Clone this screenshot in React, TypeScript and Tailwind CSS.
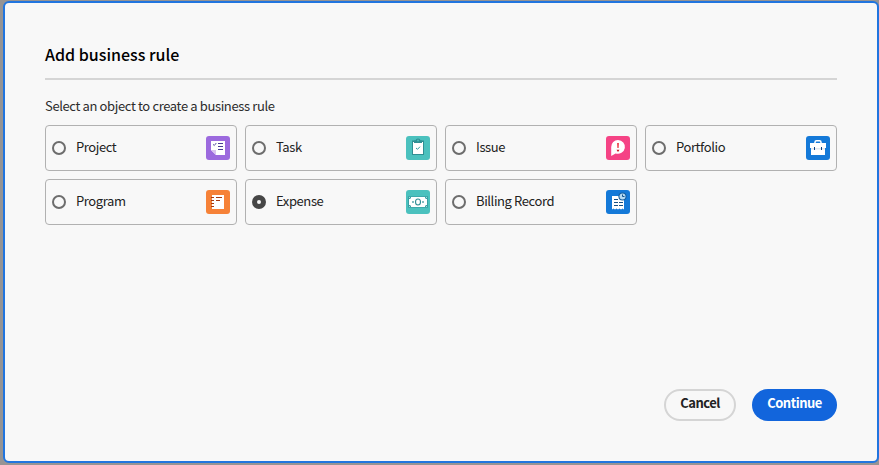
import { useState } from "react";
import type { ReactNode } from "react";

const ProjectIcon = () => (
  <>
    <path d="M5 5h14v14H10L5 14z" fill="#fff" />
    <path d="M5 14h5v5z" fill="#d9c3ef" />
    <path d="M7 8.3l1.3 1.2L10.3 7" stroke="#5a55a0" strokeWidth="1" fill="none" />
    <path d="M12 7.5h5M12 10.5h5M12 13.5h5" stroke="#4a3f94" />
  </>
);

const TaskIcon = () => (
  <>
    <path d="M6 4.5h12V19H6z" fill="#2f8f93" />
    <path d="M7 6h10v12H7z" fill="#fff" />
    <path d="M8 7V4.5h1.4a2.7 2.7 0 0 1 5.2 0H16V7z" fill="#2f8f93" />
    <circle cx="12" cy="4.5" r="0.9" fill="#4bc1be" />
    <path d="M10 12l1.5 1.3L14 10.7" stroke="#2f9a9d" fill="none" />
  </>
);

const IssueIcon = () => (
  <>
    <path d="M12 4a7 6.9 0 1 1-2.4 13.4L5.2 20V11A7 7 0 0 1 12 4z" fill="#fff" />
    <path d="M11 7h2l-.3 5h-1.4z" fill="#ed4b55" />
    <path d="M10.5 13.8h3L12 15.9z" fill="#c7131d" />
  </>
);

const PortfolioIcon = () => (
  <>
    <path d="M9 7.5V6.2Q9 4.7 10.5 4.7h3Q15 4.7 15 6.2v1.3" stroke="#fff" strokeWidth="1.5" fill="none" />
    <path d="M4 7h16v5h-1v7H5v-7H4z" fill="#fff" />
    <path d="M5 12h14v1.5H5z" fill="#e3e8ee" />
    <path d="M8.5 11v3M15.5 11v3" stroke="#0b3f80" />
  </>
);

const ProgramIcon = () => (
  <>
    <path d="M6 5h12v14H6z" fill="#fff" />
    <path d="M5 7.5h3M5 10.5h3M5 13.5h3M5 16.5h3M10 7.5h6M10 10.5h4" stroke="#a63a10" />
  </>
);

const ExpenseIcon = () => (
  <>
    <path d="M2 6.3h20v11.4H2z" fill="#3a9fa4" />
    <path d="M5 7h14v1l1 1h1v6h-1l-1 1v1H5v-1l-1-1H3V9h1l1-1z" fill="#fff" />
    <path d="M3 7h1v1H3zM20 7h1v1h-1zM3 16h1v1H3zM20 16h1v1h-1z" fill="#a4dcda" />
    <ellipse cx="12" cy="12" rx="2.5" ry="3" stroke="#318f96" strokeWidth="1.1" fill="none" />
    <path d="M6.2 11.2h1.6v1.6H6.2zM16.2 11.2h1.6v1.6h-1.6z" fill="#318f96" />
  </>
);

const BillingIcon = () => (
  <>
    <path d="M6 6h12v13.5l-1.5-1-1.5 1-1.5-1-1.5 1-1.5-1-1.5 1-1.5-1L6 19.5z" fill="#fff" />
    <path d="M8 9.5h4M8 12.5h4M13 12.5h4M8 15.5h4M13 15.5h4" stroke="#164f84" />
    <circle cx="16.5" cy="6.5" r="4.1" fill="#165f9f" />
    <circle cx="16.5" cy="6.5" r="3" fill="#b5daf3" />
    <path d="M16.5 4.5v2h2" stroke="#12558f" fill="none" />
  </>
);

type Item = { name: string; tile: string; icon: ReactNode };

const items: Item[] = [
  { name: "Project", tile: "bg-[#9c6ade]", icon: <ProjectIcon /> },
  { name: "Task", tile: "bg-[#4bc1be]", icon: <TaskIcon /> },
  { name: "Issue", tile: "bg-[#f54385]", icon: <IssueIcon /> },
  { name: "Portfolio", tile: "bg-[#1479d8]", icon: <PortfolioIcon /> },
  { name: "Program", tile: "bg-[#f68238]", icon: <ProgramIcon /> },
  { name: "Expense", tile: "bg-[#4bc1be]", icon: <ExpenseIcon /> },
  { name: "Billing Record", tile: "bg-[#1479d8]", icon: <BillingIcon /> },
];

export default function App() {
  const [selected, setSelected] = useState("Expense");

  return (
    <div className="h-[465px] w-[879px] overflow-hidden bg-[#969494] pl-[3px] pt-px font-['Noto_Sans_CJK_SC',sans-serif]">
      <div className="flex h-[462px] w-[876px] flex-col rounded-[6px] border-2 border-[#2175df] bg-[#f8f8f8] px-10">
        <h1 className="mt-[37px] h-10 border-b-2 border-[#d5d5d5] text-[16px] font-medium leading-7 text-black">
          Add business rule
        </h1>
        <p className="mt-4 h-5 text-[13px] leading-5 tracking-[-0.37px] text-[#2c2c2c]">
          Select an object to create a business rule
        </p>
        <div className="mt-[9px] grid grid-cols-4 gap-2">
          {items.map((item) => (
            <button
              key={item.name}
              role="radio"
              aria-checked={selected === item.name}
              onClick={() => setSelected(item.name)}
              className="flex h-[46px] items-center rounded-[4px] border border-[#b1b1b1] px-[6px] text-left"
            >
              <span
                className={
                  selected === item.name
                    ? "size-[14px] rounded-full border-[5px] border-[#464646] bg-[#f8f8f8]"
                    : "size-[14px] rounded-full border-2 border-[#6d6d6d] bg-[#f8f8f8]"
                }
              />
              <span className="ml-[10px] flex-1 pb-0.5 text-[13px] leading-5 tracking-[-0.4px] text-[#222]">
                {item.name}
              </span>
              <span className={`size-6 rounded-[3px] ${item.tile}`}>
                <svg viewBox="0 0 24 24" className="size-6">{item.icon}</svg>
              </span>
            </button>
          ))}
        </div>
        <div className="mb-10 mt-auto flex justify-end gap-4 text-[13px] font-bold leading-5 tracking-[-0.5px]">
          <button className="h-8 w-[72px] rounded-full border-2 border-[#d5d5d5] pb-1 text-[#222]">Cancel</button>
          <button className="h-8 w-[85px] rounded-full bg-[#1265dc] pb-1 text-white">Continue</button>
        </div>
      </div>
    </div>
  );
}
